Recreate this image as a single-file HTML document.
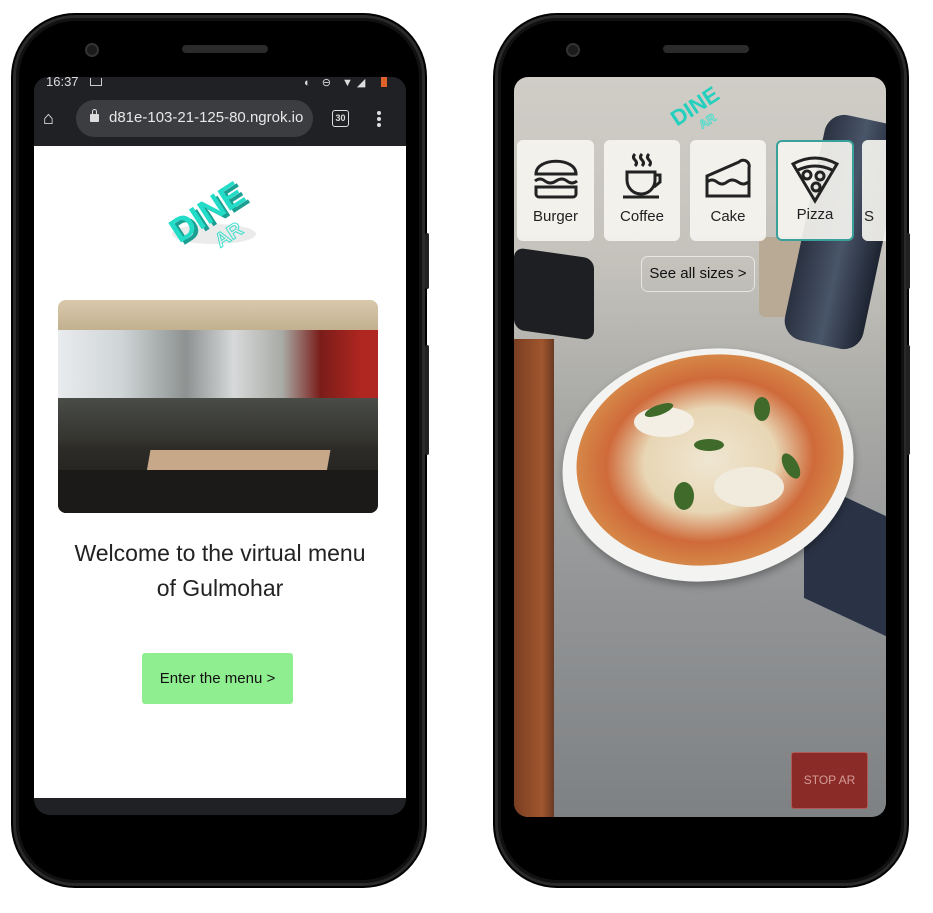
<!DOCTYPE html>
<html><head><style>
*{margin:0;padding:0;box-sizing:border-box}
body{width:933px;height:913px;background:#fff;position:relative;overflow:hidden;font-family:"Liberation Sans",sans-serif}
.abs{position:absolute}
.phone{position:absolute;top:15px;width:412px;height:871px;border-radius:62px;background:#000;border:3px solid #2a2a2a;box-shadow:0 0 0 2px #000,inset 0 0 0 3px #111}
.spk{position:absolute;top:45px;width:86px;height:8px;border-radius:4px;background:#2b2b2b}
.cam{position:absolute;top:43px;width:14px;height:14px;border-radius:50%;background:#1b1b1b;border:2px solid #333}
.btn{position:absolute;width:4px;background:#222;border-radius:2px}
.card{position:absolute;top:63px;height:101px;background:rgba(245,244,240,.92);border-radius:6px;font-size:15px;color:#222;text-align:center}
.card span{position:absolute;bottom:16px;left:0;right:0}
.card svg{position:absolute;top:12px;left:50%;margin-left:-25px}
</style></head><body>
<!-- LEFT PHONE -->
<div class="phone" style="left:13px"></div>
<div class="btn" style="left:425px;top:233px;height:56px"></div>
<div class="btn" style="left:425px;top:345px;height:110px"></div>
<div class="cam" style="left:85px"></div>
<div class="spk" style="left:182px"></div>
<div class="abs" style="left:34px;top:77px;width:372px;height:738px;background:#202124;border-radius:14px 14px 16px 16px;overflow:hidden">
  <div class="abs" style="left:12px;top:-3px;color:#ddd;font-size:13px">16:37</div>
  <div class="abs" style="left:56px;top:1px;width:12px;height:8px;border:1.5px solid #ccc;border-top:none"></div>
  <div class="abs" style="left:270px;top:-1px;color:#ddd;font-size:11px;letter-spacing:4px">◐ ⊖ ▼◢</div>
  <div class="abs" style="left:347px;top:0px;width:6px;height:10px;background:#e0622a"></div>
  <div class="abs" style="left:9px;top:31px;color:#eee;font-size:18px">⌂</div>
  <div class="abs" style="left:42px;top:23px;width:237px;height:37px;border-radius:19px;background:#3c3d40"></div>
  <div class="abs" style="left:56px;top:37px;width:9px;height:8px;background:#ddd;border-radius:1px"></div>
  <div class="abs" style="left:58px;top:32px;width:5px;height:7px;border:1.5px solid #ddd;border-bottom:none;border-radius:3px 3px 0 0"></div>
  <div class="abs" style="left:75px;top:32px;color:#e8e8e8;font-size:15px">d81e-103-21-125-80.ngrok.io</div>
  <div class="abs" style="left:298px;top:33px;width:17px;height:17px;border:1.6px solid #ddd;border-radius:3px;color:#ddd;font-size:9px;text-align:center;line-height:14px;font-weight:bold">30</div>
  <div class="abs" style="left:343px;top:34px;width:4px;height:4px;background:#ddd;border-radius:50%;box-shadow:0 6px 0 #ddd,0 12px 0 #ddd"></div>
  <div class="abs" style="left:0;top:69px;width:372px;height:652px;background:#fff">
    <svg class="abs" style="left:128px;top:26px" width="110" height="86" viewBox="0 0 110 86">
      <ellipse cx="52" cy="62" rx="42" ry="10" fill="#ddd" opacity=".6"/>
      <g transform="rotate(-33 55 40)">
        <text x="8" y="50" font-family="Liberation Sans" font-weight="bold" font-size="34" fill="#1a9f92">DINE</text>
        <text x="6" y="46" font-family="Liberation Sans" font-weight="bold" font-size="34" fill="#22dcc8">DINE</text>
        <text x="38" y="72" font-family="Liberation Sans" font-weight="bold" font-size="20" fill="none" stroke="#3fe0cf" stroke-width="1">AR</text>
      </g>
    </svg>
    <div class="abs" style="left:24px;top:154px;width:320px;height:213px;border-radius:8px;overflow:hidden;background:linear-gradient(180deg,#c9b59a 0%,#bfae92 18%,#8c8a7f 30%,#5a5d55 45%,#2d2b27 70%,#1d1b19 100%)">
      <div class="abs" style="left:0;top:28px;width:320px;height:70px;background:linear-gradient(90deg,#e9ecee 0%,#cfd4d6 20%,#8d9291 40%,#d7d9da 55%,#a9aba6 70%,#7a1d1a 82%,#b02620 95%)"></div>
      <div class="abs" style="left:0;top:0;width:320px;height:30px;background:linear-gradient(180deg,#d9c9ac,#c2b08f)"></div>
      <div class="abs" style="left:0;top:98px;width:320px;height:40px;background:linear-gradient(180deg,#4a4c48,#353532)"></div>
      <div class="abs" style="left:90px;top:150px;width:180px;height:28px;background:#c7a98a;transform:skewX(-10deg)"></div>
      <div class="abs" style="left:0;top:170px;width:320px;height:43px;background:#1b1a18"></div>
    </div>
    <div class="abs" style="left:0;top:390px;width:372px;text-align:center;font-size:23px;line-height:35px;color:#222">Welcome to the virtual menu<br>of Gulmohar</div>
    <div class="abs" style="left:108px;top:507px;width:151px;height:51px;background:#8fee8f;border-radius:3px;font-size:15px;color:#111;text-align:center;line-height:51px">Enter the menu &gt;</div>
  </div>
</div>

<!-- RIGHT PHONE -->
<div class="phone" style="left:495px"></div>
<div class="btn" style="left:906px;top:233px;height:56px"></div>
<div class="btn" style="left:906px;top:345px;height:110px"></div>
<div class="cam" style="left:566px"></div>
<div class="spk" style="left:663px"></div>
<div class="abs" style="left:514px;top:77px;width:372px;height:740px;border-radius:14px;overflow:hidden;background:linear-gradient(180deg,#cfcdc6 0%,#c4c2bb 25%,#a9a9a6 45%,#929496 70%,#7e8183 100%)">
  <div class="abs" style="left:0;top:262px;width:40px;height:478px;background:linear-gradient(90deg,#7a3e22,#a0562e 70%,#6a3a24)"></div>
  <div class="abs" style="left:0;top:176px;width:80px;height:82px;background:#1e1f22;border-radius:10px;transform:skewY(8deg)"></div>
  <div class="abs" style="left:245px;top:160px;width:70px;height:80px;background:#b9aa95;border-radius:6px"></div>
  <div class="abs" style="left:290px;top:40px;width:80px;height:230px;background:linear-gradient(90deg,#2a3140,#495569,#1d2330);border-radius:20px;transform:rotate(12deg)"></div>
  <div class="abs" style="left:290px;top:420px;width:82px;height:120px;background:#2a3346;transform:skewY(25deg)"></div>
  <svg class="abs" style="left:150px;top:2px" width="70" height="50" viewBox="0 0 70 50">
    <g transform="rotate(-33 35 25)"><text x="4" y="32" font-family="Liberation Sans" font-weight="bold" font-size="22" fill="#22d0bd">DINE</text>
    <text x="24" y="48" font-family="Liberation Sans" font-weight="bold" font-size="12" fill="none" stroke="#3fe0cf" stroke-width=".8">AR</text></g>
  </svg>
  <!-- pizza -->
  <div class="abs" style="left:48px;top:272px;width:292px;height:232px;border-radius:50%;background:#f3f3f1;transform:rotate(-8deg);box-shadow:0 4px 8px rgba(0,0,0,.3)"></div>
  <div class="abs" style="left:62px;top:278px;width:268px;height:210px;border-radius:50%;background:radial-gradient(ellipse at 50% 50%,#efe6d2 0%,#e8d6b4 35%,#cf6a3a 55%,#d9944e 78%,#c5803e 90%,#8a5a30 100%);transform:rotate(-8deg)"></div>
  <div class="abs" style="left:120px;top:330px;width:60px;height:30px;background:#f4efe4;border-radius:50%"></div>
  <div class="abs" style="left:200px;top:390px;width:70px;height:40px;background:#f1ebde;border-radius:50%"></div>
  <div class="abs" style="left:130px;top:328px;width:30px;height:10px;background:#3f6a2a;border-radius:50%;transform:rotate(-20deg)"></div>
  <div class="abs" style="left:240px;top:320px;width:16px;height:24px;background:#3f6a2a;border-radius:50%"></div>
  <div class="abs" style="left:270px;top:375px;width:14px;height:28px;background:#3f6a2a;border-radius:50%;transform:rotate(-30deg)"></div>
  <div class="abs" style="left:160px;top:405px;width:20px;height:28px;background:#3f6a2a;border-radius:50%"></div>
  <div class="abs" style="left:180px;top:362px;width:30px;height:12px;background:#3f6a2a;border-radius:50%"></div>
  <!-- cards -->
  <div class="card" style="left:3px;width:77px"><svg width="50" height="50" viewBox="0 0 50 50" fill="none" stroke="#222" stroke-width="3"><path d="M5 22C5 5 45 5 45 22Z"/><path d="M4 29q5-4 10 0t11 0t11 0t10 0"/><path d="M5 35h40v7a3 3 0 0 1-3 3H8a3 3 0 0 1-3-3Z"/></svg><span>Burger</span></div>
  <div class="card" style="left:90px;width:76px"><svg width="50" height="50" viewBox="0 0 50 50" fill="none" stroke="#222" stroke-width="3"><path d="M18 2q-3 3 0 6t0 6M25 2q-3 3 0 6t0 6M32 2q-3 3 0 6t0 6"/><path d="M10 20h28v8a14 14 0 0 1-28 0Z"/><path d="M38 23h5v7l-6 5"/><path d="M6 45h36"/></svg><span>Coffee</span></div>
  <div class="card" style="left:176px;width:76px"><svg width="50" height="50" viewBox="0 0 50 50" fill="none" stroke="#222" stroke-width="3"><path d="M4 24L36 10a6 6 0 0 1 10 6v28H4Z"/><path d="M4 30q5-4 10 0t10 0t11 0t10 0"/></svg><span>Cake</span></div>
  <div class="card" style="left:262px;width:78px;border:2px solid #3aa09a"><svg width="50" height="50" viewBox="0 0 50 50" fill="none" stroke="#222" stroke-width="3"><path d="M3 10q22-12 44 0L25 47Z"/><path d="M8 16q17-8 34 0"/><circle cx="17" cy="21" r="4"/><circle cx="30" cy="22" r="4"/><circle cx="26" cy="33" r="4"/></svg><span>Pizza</span></div>
  <div class="card" style="left:348px;width:40px"><span style="left:2px;text-align:left">S</span></div>
  <div class="abs" style="left:127px;top:179px;width:114px;height:36px;border:1.5px solid rgba(255,255,255,.6);border-radius:7px;font-size:15px;color:#111;line-height:34px;text-align:center">See all sizes &gt;</div>
  <div class="abs" style="left:277px;top:675px;width:77px;height:57px;background:#8a2b27;border:1px solid #b05a55;border-radius:3px;color:#d59b98;font-size:12px;text-align:center;line-height:55px">STOP AR</div>
</div>
</body></html>
